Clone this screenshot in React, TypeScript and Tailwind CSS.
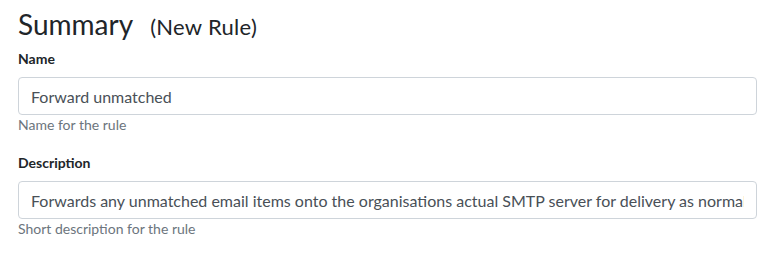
import React from "react";

const Field = ({ label, value, help }: { label: string; value: string; help: string }) => (
  <div className="mb-[18px]">
    <label className="block text-[14px] font-bold text-[#212529] mb-[8px] leading-[20px]">{label}</label>
    <input
      readOnly
      value={value}
      className="block w-full h-[38px] px-[12px] pt-[1px] text-[16px] text-[#495057] bg-white border border-[#ced4da] rounded-[4px] outline-none"
    />
    <small className="block text-[14px] text-[#6c757d] leading-[20px]">{help}</small>
  </div>
);

export default function App() {
  return (
    <div className="bg-white w-[773px] h-[254px] pl-[18px] pr-[16px] pt-[4px] font-['Lato',sans-serif]">
      <h2 className="flex items-baseline h-[40px] text-[#212529] mb-[5px] leading-[40px]">
        <span className="text-[28px]">Summary</span>
        <span className="ml-[17px] text-[22px] tracking-[0.3px]">(New Rule)</span>
      </h2>
      <Field label="Name" value="Forward unmatched" help="Name for the rule" />
      <Field
        label="Description"
        value="Forwards any unmatched email items onto the organisations actual SMTP server for delivery as normal"
        help="Short description for the rule"
      />
    </div>
  );
}
